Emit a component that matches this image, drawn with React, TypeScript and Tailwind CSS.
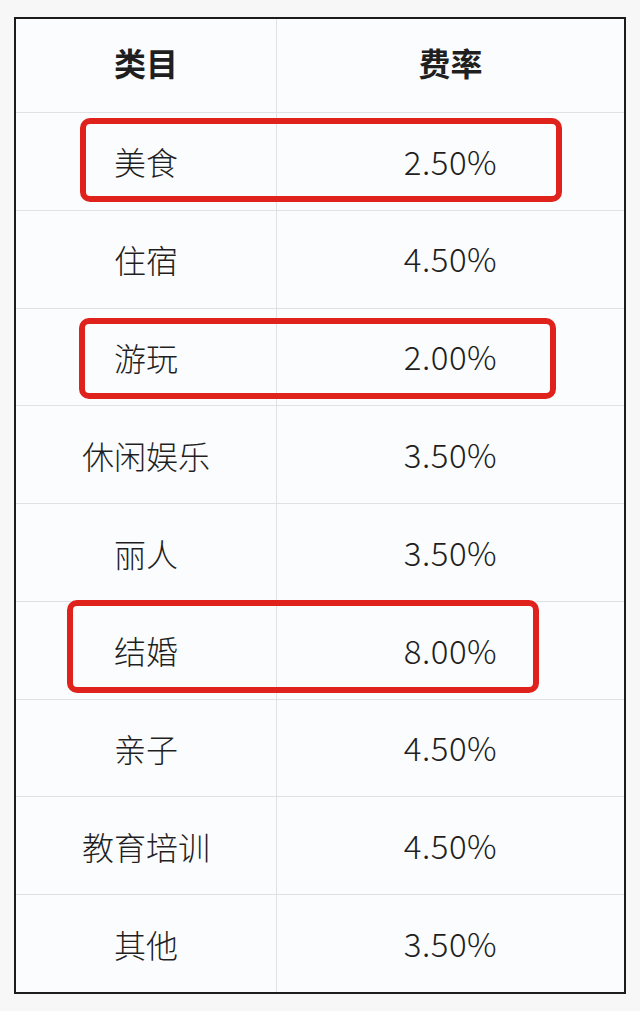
import React from 'react';

const rows: [string, string][] = [
  ['美食', '2.50%'],
  ['住宿', '4.50%'],
  ['游玩', '2.00%'],
  ['休闲娱乐', '3.50%'],
  ['丽人', '3.50%'],
  ['结婚', '8.00%'],
  ['亲子', '4.50%'],
  ['教育培训', '4.50%'],
  ['其他', '3.50%'],
];

const font = { fontFamily: '"Noto Sans CJK SC", "Noto Sans", sans-serif' };

const App: React.FC = () => {
  return (
    <div className="relative w-[640px] h-[1011px] bg-[#f7f7f8] pt-[17px] pl-[14px]" style={font}>
      <div className="w-[612px] h-[977px] border-2 border-[#1c1c1c] bg-[#fbfcfe] flex flex-col text-[#1f1f1f]">
        {/* header */}
        <div className="flex h-[94px] border-b border-[#dfe1e6]">
          <div className="w-[261px] border-r border-[#dfe1e6] flex items-center justify-center pb-[8px] text-[32px] font-bold">
            类目
          </div>
          <div className="flex-1 flex items-center justify-center pb-[8px] text-[32px] font-bold">费率</div>
        </div>
        {rows.map(([name, rate], i) => (
          <div
            key={name}
            className={`flex flex-1 ${i < rows.length - 1 ? 'border-b border-[#dfe1e6]' : ''}`}
          >
            <div className="w-[261px] border-r border-[#dfe1e6] flex items-center justify-center text-[32px] font-light">
              {name}
            </div>
            <div className="flex-1 flex items-center justify-center text-[33px] font-light tracking-[0.5px]">
              {rate}
            </div>
          </div>
        ))}
      </div>

      {/* red highlight boxes */}
      <div className="absolute left-[80px] top-[118px] w-[482px] h-[84px] border-[6px] border-[#e0221d] rounded-[10px]" />
      <div className="absolute left-[79px] top-[318px] w-[477px] h-[81px] border-[6px] border-[#e0221d] rounded-[10px]" />
      <div className="absolute left-[67px] top-[600px] w-[472px] h-[93px] border-[6px] border-[#e0221d] rounded-[10px]" />
    </div>
  );
};

export default App;
